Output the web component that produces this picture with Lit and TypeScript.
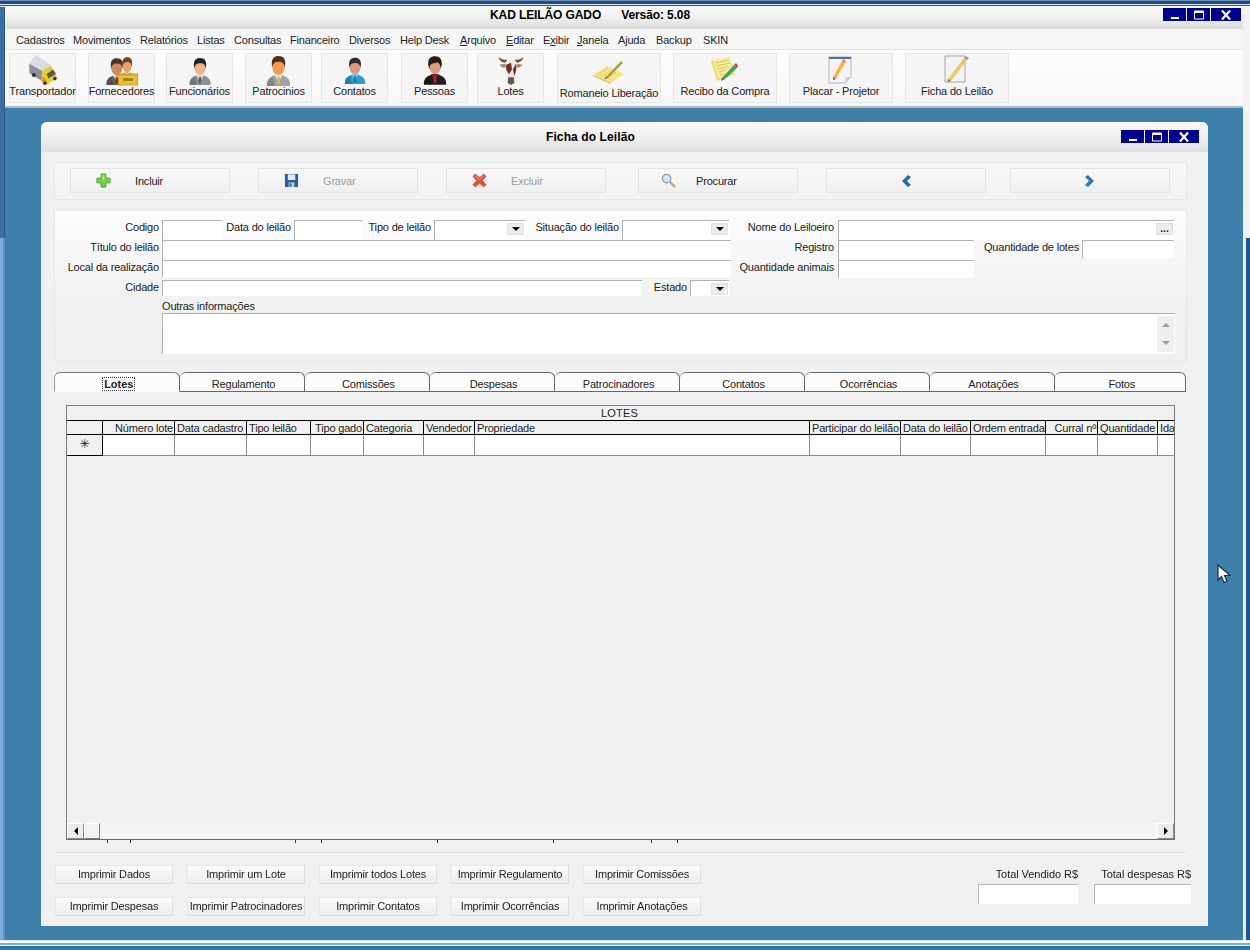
import { LitElement, html, css, svg } from "lit";
import { customElement } from "lit/decorators.js";

const person = (o: { hair: string; skin: string; suit: string; shirt: string; tie: string; t?: string }) => svg`
<g transform=${o.t || ""}>
  <path d="M4 32C3 24 9 21.5 16 20c7 1.500 13 4 12 12Z" fill=${o.suit}/>
  <path d="M4 32C4 27 6 24.500 10 22.500L12 32Z" fill="#000" opacity=".18"/>
  <path d="M11.500 20.500 16 28l4.500-7.500Z" fill=${o.shirt}/>
  <path d="M15 22.500h2l.7 6-1.700 2.500-1.700-2.500Z" fill=${o.tie}/>
  <ellipse cx="16" cy="12" rx="6.500" ry="8.500" fill=${o.skin}/>
  <path d="M9.500 13C7.500 3 12 1 16 1c5 0 8.500 3 6.500 12-.5-4-2-6-6.500-6-4 0-6 2-6.500 6Z" fill=${o.hair}/>
</g>`;

const ICONS: Record<string, unknown> = {
  truck: html`<svg class="ic" style="width:30px;height:31px" viewBox="0 0 32 34">
    <path d="M1 10 8 1l17 11-8 7Z" fill="#d9dbe2"/>
    <path d="M1 10v11l13 8 3-10Z" fill="#8f8e9e"/>
    <path d="M1 10l16 9" stroke="#f2f2f6" stroke-width=".8"/>
    <path d="M15 19l9-6 6 7 1 7-11 7-6-3Z" fill="#e8cb35"/>
    <path d="M20 22l7-5 3 5-8 5Z" fill="#5e5a48"/>
    <path d="M15 25l5 3v4l-6-3Z" fill="#c9a41c"/>
    <circle cx="6" cy="23" r="2.200" fill="#333"/><circle cx="18" cy="32" r="2" fill="#333"/><circle cx="29" cy="27" r="2" fill="#333"/>
  </svg>`,
  forn: html`<svg class="ic" style="width:34px;height:31px;margin-top:2px" viewBox="0 0 34 30">
    ${person({ hair: "#4b3428", skin: "#c98a5e", suit: "#666158", shirt: "#ddd", tie: "#8a2f2f", t: "translate(-2 1) scale(.86)" })}
    ${person({ hair: "#6a4526", skin: "#e5a06b", suit: "#8a6a2e", shirt: "#eee", tie: "#9c7a24", t: "translate(11 0) scale(.7 .78)" })}
    <path d="M13 17h20v12H13Z" fill="#cfa21f"/><path d="M14 19h18v9H14Z" fill="#e6c03c"/><path d="M18 21.500h10v3H18Z" fill="#a5811a"/>
  </svg>`,
  func: html`<svg class="ic" style="width:22px;height:28px;margin-top:3px" viewBox="4 0 24 32">
    ${person({ hair: "#26211e", skin: "#edb48c", suit: "#8d9092", shirt: "#dfe2e4", tie: "#5a6064" })}
  </svg>`,
  patr: html`<svg class="ic" style="width:25px;height:31px;margin-top:1px" viewBox="3 0 26 32">
    ${person({ hair: "#4a3322", skin: "#f29a4f", suit: "#9fa1a3", shirt: "#e4e4dc", tie: "#d5bb3e" })}
  </svg>`,
  cont: html`<svg class="ic" style="width:22px;height:27px;margin-top:3px" viewBox="4 0 24 32">
    ${person({ hair: "#352a26", skin: "#dc9a78", suit: "#2f9bc9", shirt: "#6ec4e4", tie: "#1f7aa4" })}
  </svg>`,
  pess: html`<svg class="ic" style="width:24px;height:32px" viewBox="3 0 26 32">
    ${person({ hair: "#2b1a16", skin: "#d99c80", suit: "#241c1e", shirt: "#7d2030", tie: "#a02c3c" })}
    <path d="M9 6C9 1 23 0 23 7c0 3 .5 5-1 7 0-3-1-6-4-6-3 1-6 1-7.500 3L10 15C9 12 8.500 9 9 6Z" fill="#2b1a16"/>
  </svg>`,
  cow: html`<svg class="ic" style="width:28px;height:29px;margin-top:2px" viewBox="0 0 28 30">
    <path d="M9 7C5 7 2 5 1 1c2 2 5 3 9 3ZM19 7c4 0 7-2 8-6-2 2-5 3-9 3Z" fill="#6f5038"/>
    <path d="M8 8 2 9l3 3h5ZM20 8l6 1-3 3h-5Z" fill="#a9836b"/>
    <path d="M8 6c4-2 8-2 12 0l-1 9-2 10h-6L9 15Z" fill="#efe8e2"/>
    <path d="M9 9l5-2 1 7-3 5-3-5ZM16 14l3-6 .5 6-2 7Z" fill="#6c2f28"/>
    <path d="M11 22h6l.5 6-3.500 2-3.500-2Z" fill="#5c5e52"/>
  </svg>`,
  rom: html`<svg class="ic" style="width:32px;height:24px;margin-top:6px" viewBox="0 0 32 24">
    <path d="M0 15 14 6l17 8-13 9Z" fill="#f4e58c"/>
    <path d="M4 15l11-7M8 17l11-7M12 19l11-7" stroke="#d8c45e" stroke-width=".7"/>
    <path d="M0 15l18 8v1L0 16Z" fill="#c9b552"/>
    <path d="M13 17 28 1l2 2L15 18Z" fill="#a8a13c"/><path d="M13 17l-2 2 4-1Z" fill="#444"/>
  </svg>`,
  rec: html`<svg class="ic" style="width:28px;height:25px;margin-top:3px" viewBox="0 0 28 25">
    <path d="M0 4 18 0l6 17-18 7Z" fill="#e9d868"/><path d="M2 3 19 .5l5 15L7 22Z" fill="#f7ec98"/>
    <path d="M4 6l14-3M5 9l14-3M6 12l10-2M8 15l6-2M9 18l4-1" stroke="#c8ba5a" stroke-width=".8"/>
    <path d="M11 21 23 8l3 3-12 11Z" fill="#3fa35a"/><path d="M23 8l2-2 2 3-1 2Z" fill="#c8403a"/><path d="M11 21l-1 3 4-2Z" fill="#555"/>
  </svg>`,
  plac: html`<svg class="ic" style="width:26px;height:28px;margin-top:2px" viewBox="0 0 26 28">
    <path d="M1 1h22v20l-6 6H1Z" fill="#f4f4f8" stroke="#9fa4b0" stroke-width=".8"/>
    <path d="M1 1h22v2H1Z" fill="#4f6f9c"/>
    <path d="M17 27l1-6h5Z" fill="#c9cbd8"/>
    <path d="M5 21 14 5l3 2-9 16Z" fill="#eeb93a"/><path d="M14 5l1-2 3 2-1 2Z" fill="#d08a3a"/><path d="M5 21l0 3 3-1Z" fill="#555"/>
  </svg>`,
  fich: html`<svg class="ic" style="width:26px;height:29px;margin-top:1px" viewBox="0 0 26 29">
    <path d="M1 1h20v26H1Z" fill="#f3f3f3" stroke="#8f8f8f" stroke-width=".8"/>
    <path d="M4 24 20 3l3 2L7 26Z" fill="#eac66a"/><path d="M20 3l2-2 3 2-2 2Z" fill="#9a9a9a"/><path d="M4 24l-.5 3 3.500-1Z" fill="#7c6a3c"/>
  </svg>`,
};

const plus = html`<svg class="b" viewBox="0 0 16 16"><path d="M5.500 1h5v4.500H15v5h-4.500V15h-5v-4.500H1v-5h4.500Z" fill="#7ccf4e" stroke="#4a9a2c"/><path d="M7 2.500h2v5h-2Z" fill="#b6ec8c"/></svg>`;
const floppy = html`<svg class="b" viewBox="0 0 16 16"><path d="M1 1h14v14H1Z" fill="#2a5c9e"/><path d="M4 1.500h8v6H4Z" fill="#e6eaf2"/><path d="M5 10h6v5H5Z" fill="#c4ccd8"/><path d="M6 11h2v3.500H6Z" fill="#2a5c9e"/></svg>`;
const cross = html`<svg class="b" viewBox="0 0 16 16"><path d="M1 3.500 3.500 1 8 5l4.500-4L15 3.500 11 8l4 4.500-2.500 2.500L8 11l-4.500 4L1 12.500 5 8Z" fill="#e4503c" stroke="#b8361f" stroke-width=".6"/><path d="M3 3 8 7l4-3.500" stroke="#f5a590" fill="none"/></svg>`;
const lens = html`<svg class="b" viewBox="0 0 16 16"><circle cx="6" cy="6" r="4.500" fill="#cfe6f4" stroke="#7f9fb4" stroke-width="1.300"/><path d="M4 4.500a3 3 0 0 1 3-1" stroke="#fff" fill="none"/><path d="M9.500 9.500 15 15" stroke="#c9a36a" stroke-width="2.400"/></svg>`;
const chevL = html`<svg class="b n" viewBox="0 0 12 14"><path d="M8 1 2 7l6 6 3-2-4-4 4-4Z" fill="#2468ac"/></svg>`;
const chevR = html`<svg class="b n" viewBox="0 0 12 14"><path d="M4 1l6 6-6 6-3-2 4-4-4-4Z" fill="#2f78b4"/></svg>`;

const MENU: [unknown, number][] = [
  ["Cadastros", 57], ["Movimentos", 67], ["Relatórios", 57], ["Listas", 37], ["Consultas", 56], ["Financeiro", 59], ["Diversos", 51], ["Help Desk", 60],
  [html`<u>A</u>rquivo`, 46], [html`<u>E</u>ditar`, 37], [html`E<u>x</u>ibir`, 34], [html`<u>J</u>anela`, 41], ["Ajuda", 38], ["Backup", 47], ["SKIN", 40],
];
const TOOLS: [string, string, number, number][] = [
  ["Transportador", "truck", 67, 0], ["Fornecedores", "forn", 67, 12], ["Funcionários", "func", 67, 11], ["Patrocinios", "patr", 67, 12], ["Contatos", "cont", 67, 9],
  ["Pessoas", "pess", 67, 13], ["Lotes", "cow", 67, 9], ["Romaneio Liberação", "rom", 104, 13], ["Recibo da Compra", "rec", 104, 12], ["Placar - Projetor", "plac", 104, 12], ["Ficha do Leilão", "fich", 104, 12],
];
const TABS = ["Lotes", "Regulamento", "Comissões", "Despesas", "Patrocinadores", "Contatos", "Ocorrências", "Anotações", "Fotos"];
const COLS: [string, string?][] = [
  ["", ""], ["Número lote", "r"], ["Data cadastro"], ["Tipo leilão"], ["Tipo gado", "r"], ["Categoria"], ["Vendedor"], ["Propriedade"], ["Participar do leilão"], ["Data do leilão"], ["Ordem entrada"], ["Curral nº", "r"], ["Quantidade"], ["Ida"],
];
const TICKS = [41, 64, 229, 255, 371, 487, 585, 611];
const PRINT = ["Imprimir Dados", "Imprimir um Lote", "Imprimir todos Lotes", "Imprimir Regulamento", "Imprimir Comissões", "Imprimir Despesas", "Imprimir Patrocinadores", "Imprimir Contatos", "Imprimir Ocorrências", "Imprimir Anotações"];

@customElement("app-root")
export class AppRoot extends LitElement {
  static styles = css`
    :host { display: block; width: 1250px; height: 950px; position: relative; overflow: hidden;
      font-family: "Liberation Sans", Arial, sans-serif; font-size: 11px; letter-spacing: -0.18px; color: #222; }
    * { box-sizing: border-box; }
    .screen { width: 1250px; height: 950px; display: flex; flex-direction: column; padding: 0 7px 0 5px; filter: blur(.3px);
      background:
        linear-gradient(to right, #3c6ea4 0 4px, #27598c 4px 5px, transparent 5px 1243px, #f0f2f4 1243px 1250px) top/100% 238px no-repeat,
        linear-gradient(to right, #7eaede 0 3px, #5a92c8 3px 5px, transparent 5px 1243px, #e8eef4 1243px 1246px, #1e5596 1246px); }
    .topedge { height: 7px; margin: 0 -7px 0 -5px; flex: none;
      background: linear-gradient(#6f93b8 0 1px, #1f4c80 1px 4px, #dfe6ee 4px 5px, #27598c 5px 6px, #f2f2f2 6px); }
    .title { height: 22px; flex: none; display: flex; align-items: flex-start; padding-top: 1px; line-height: 14px; background: linear-gradient(#fafafa, #f2f2f2 40%, #dcdcdc); font-weight: bold; font-size: 12px; letter-spacing: -.1px; color: #000; }
    .title .t1 { margin-left: 485px; } .title .t2 { margin-left: 20px; }
    .winbtns { margin-left: auto; display: flex; gap: 1px; height: 13px; align-self: flex-start; margin-right: 2px; }
    .winbtns span { width: 23px; background: #00008e; display: flex; align-items: center; justify-content: center; }
    .winbtns span:last-child { width: 30px; }
    .winbtns svg { width: 12px; height: 10px; display: block; }
    .menu { height: 21px; flex: none; display: flex; align-items: center; padding: 1px 0 0 11px; background: #f6f6f6; border-bottom: 1px solid #e2e2e2; }
    .menu span { flex: none; white-space: nowrap; }
    .toolbar { height: 58px; flex: none; display: flex; padding: 3px 0 0 4px; background: linear-gradient(#fdfdfd, #f7f7f7); border-bottom: 2px solid #b4b8bc; }
    .tool { height: 50px; flex: none; border: 1px solid #e6e6e6; background: #f5f5f5; display: flex; flex-direction: column; align-items: center; white-space: nowrap; }
    .iw { height: 31px; flex: none; display: flex; justify-content: center; align-items: flex-start; }
    .tool .ic { display: block; flex: none; }
    .tool .lb { line-height: 13px; }
    .tool .lb.low { position: relative; top: 2px; }
    .mdi { flex: 1; background: #3e7fa9; padding: 14px 35px 0 36px; }
    .win { height: 804px; background: #eef2f6; border-radius: 6px 6px 0 0; display: flex; flex-direction: column; }
    .wtitle { height: 30px; flex: none; display: flex; align-items: center; border-radius: 6px 6px 0 0; background: linear-gradient(#fbfbfb, #ececec 60%, #dedede); font-weight: bold; font-size: 12px; letter-spacing: .1px; color: #000; }
    .wtitle .tt { margin-left: 505px; }
    .wtitle .winbtns { margin-top: 8px; margin-right: 9px; }
    .body { flex: 1; margin: 0 5px; background: #f0f0f0; padding: 10px 16px 0 8px; display: flex; flex-direction: column; }
    .actions { height: 38px; flex: none; border: 1px solid #e6e6e6; background: linear-gradient(#f8f8f8, #f2f2f2); display: flex; padding: 5px 0 0 15px; }
    .act { width: 160px; height: 25px; flex: none; border: 1px solid #e2e2e2; background: linear-gradient(#f8f8f8, #efefef); display: flex; align-items: center; padding-left: 25px; }
    .act .b { width: 15px; height: 15px; flex: none; }
    .act span { margin-left: 24px; }
    .act.off span { color: #9a9a9a; }
    .act.nav { justify-content: center; padding: 0; }
    .act .b.n { width: 12px; height: 14px; }
    .m28 { margin-left: 28px; } .m32 { margin-left: 32px; } .m24 { margin-left: 24px; }
    .form { height: 152px; flex: none; margin-top: 10px; border: 1px solid #e6e6e6; background: linear-gradient(#fcfcfc, #f1f1f1 60%, #efefef); padding-top: 9px; }
    .cols { display: flex; height: 80px; }
    .left { width: 676px; flex: none; } .right { margin-left: 7px; flex: 1; }
    .row { display: flex; height: 20px; }
    .lbl { flex: none; text-align: right; line-height: 15px; white-space: nowrap; }
    .w105 { width: 104px; } .w69 { width: 69px; } .w94 { width: 94px; } .w45 { width: 45px; } .w96 { width: 96px; } .w102 { width: 105px; }
    .in { flex: none; margin-left: 3px; height: 20px; background: #fff; border-top: 1px solid #b0b0b0; border-left: 1px solid #b0b0b0; position: relative; }
    .right .in { margin-left: 4px; }
    .right .in.near { margin-left: 3px; }
    .in.short { height: 18px; } .in.h17 { height: 17px; } .in.h16 { height: 16px; }
    .w60 { width: 60px; } .w68 { width: 68px; } .w91 { width: 91px; } .w107 { width: 107px; } .w569 { width: 569px; } .w480 { width: 480px; } .w39 { width: 39px; } .w336 { width: 336px; } .w136 { width: 136px; } .w92 { width: 92px; }
    .drop { position: absolute; right: 1px; top: 2px; width: 17px; height: 12px; background: #ececec; border: 1px solid #e0e0e0; display: flex; align-items: center; justify-content: center; }
    .drop::after { content: ""; border: 4px solid transparent; border-top: 4px solid #000; border-bottom: 0; }
    .dots { position: absolute; right: 1px; top: 2px; width: 17px; height: 12px; background: #ececec; border: 1px solid #e0e0e0; font-size: 10px; font-weight: bold; line-height: 9px; text-align: center; letter-spacing: 0; font-style: normal; }
    .oi { margin: 0 0 0 107px; line-height: 13px; height: 13px; }
    .ta { margin: 0 0 0 107px; width: 1013px; height: 41px; background: #fff; border-top: 1px solid #b0b0b0; border-left: 1px solid #b0b0b0; display: flex; justify-content: flex-end; padding: 2px 1px 2px 0; }
    .sb { width: 17px; background: #efefef; display: flex; flex-direction: column; justify-content: space-between; align-items: center; padding: 7px 0; }
    .tri-u { border: 4px solid transparent; border-bottom: 4px solid #9a9a9a; border-top: 0; }
    .tri-d { border: 4px solid transparent; border-top: 4px solid #9a9a9a; border-bottom: 0; }
    .tabs { display: flex; height: 20px; flex: none; margin-top: 10px; }
    .tab { width: 125px; flex: none; height: 20px; background: #fcfcfc; border: 1px solid #666; border-radius: 6px 6px 0 0; display: flex; align-items: center; justify-content: center; padding: 3px 0 0 4px; }
    .tab:first-child { width: 125.500px; padding-left: 4px; }
    .tab + .tab { border-left: 0; }
    .tab:last-child { width: 131.500px; }
    .tab.on { border-bottom-color: #fcfcfc; border-top-color: #777; border-left-color: #999; font-weight: bold; letter-spacing: -.05px; }
    .tab.on span { outline: 1px dotted #333; padding: 0 1px; line-height: 12px; }
    .panel { flex: 1; background: #f0f0f0; padding: 13px 12px 0; display: flex; flex-direction: column; min-height: 0; }
    .grid { height: 435px; flex: none; border: 1px solid #777; border-bottom-color: #666; display: flex; flex-direction: column; background: #f0f0f0; overflow: hidden; width: 1109px; }
    .gtitle { height: 14px; flex: none; text-align: center; line-height: 15px; padding-right: 2px; letter-spacing: .15px; }
    .gr { display: grid; grid-template-columns: 36px 72px 72px 64px 53px 60px 51px 335px 91px 70px 75px 52px 60px 17px; flex: none; }
    .gh { height: 15px; border-top: 1px solid #000; border-bottom: 1px solid #000; }
    .gh div { border-right: 1px solid #000; line-height: 14px; padding: 0 1px 0 2px; white-space: nowrap; overflow: hidden; background: #f0f0f0; }
    .gh div:last-child { border-right: 0; }
    .gh .r { text-align: right; }
    .gb { height: 21px; }
    .gb div { background: #fff; border-right: 1px solid #8a8a8a; border-bottom: 1px solid #8a8a8a; }
    .gb div:first-child { background: #f0f0f0; border-right: 1px solid #000; border-bottom: 1px solid #000; text-align: center; font: 12px/19px "DejaVu Sans", sans-serif; letter-spacing: 0; }
    .gb div:last-child { border-right: 0; }
    .gfill { flex: 1; }
    .hbar { height: 16px; flex: none; display: flex; background-color: #f6f6f6; background-image: repeating-conic-gradient(#ececec 0 25%, #fbfbfb 0 50%); background-size: 2px 2px; }
    .sbtn { width: 17px; background: #ececec; border: 1px solid; border-color: #fff #888 #888 #fff; display: flex; align-items: center; justify-content: center; flex: none; }
    .sbtn.thumb { width: 16px; background: #f2f2f2; border-right-color: #777; border-bottom-color: #777; }
    .sbtn.end { margin-left: auto; }
    .tl { border: 4px solid transparent; border-right: 4px solid #000; border-left: 0; }
    .tr { border: 4px solid transparent; border-left: 4px solid #000; border-right: 0; }
    .ticks { display: block; flex: none; width: 1109px; height: 3px; }
    .sep { height: 1px; margin: 9px -12px 0; flex: none; background: #dedede; box-shadow: 0 1px 0 #f8f8f8; }
    .foot { display: flex; flex: none; margin: 12px -12px 0; }
    .prints { display: grid; grid-template-columns: repeat(5, 118px); column-gap: 14px; row-gap: 13px; margin-left: 1px; }
    .pb { height: 19px; background: linear-gradient(#fafafa, #ececec); border: 1px solid #e6e6e6; border-bottom-color: #dadada; border-right-color: #dedede; text-align: center; line-height: 17px; white-space: nowrap; }
    .totals { margin-left: 277px; display: flex; gap: 16px; margin-top: 2px; }
    .tot { display: flex; flex-direction: column; letter-spacing: -.05px; }
    .tot .lbl { height: 17px; line-height: 14px; }
    .tot .val { height: 20px; background: #fff; border-top: 1px solid #b4b4b4; border-left: 1px solid #b4b4b4; }
    .t100 { width: 100px; } .t97 { width: 97px; margin-right: -4px; }
    .bottom { height: 10px; flex: none; margin: 0 -7px 0 -5px; background: linear-gradient(#dfeaf2 0 1px, #ffffff 1px 3px, #79aed0 3px 5px, #f4fafc 5px 6px, #2b6ca4 6px 8px, #2a78b4 8px); }
    .cursor { position: absolute; left: 1217px; top: 564px; width: 14px; height: 20px; display: block; }
  `;

  private winBtns() {
    return html`<div class="winbtns">
      <span><svg viewBox="0 0 12 10"><path d="M2 7h8v2H2Z" fill="#fff"/></svg></span>
      <span><svg viewBox="0 0 12 10"><path d="M1.500 1h9v8h-9Z" fill="none" stroke="#fff"/><path d="M1.500 2h9" stroke="#fff" stroke-width="2"/></svg></span>
      <span><svg viewBox="0 0 12 10"><path d="M2 .5 6 5l4-4.500M2 9.500 6 5l4 4.500" fill="none" stroke="#fff" stroke-width="2.200"/></svg></span>
    </div>`;
  }

  render() {
    return html`<div class="screen">
      <div class="topedge"></div>
      <div class="title"><span class="t1">KAD LEILÃO GADO</span><span class="t2">Versão: 5.08</span>${this.winBtns()}</div>
      <div class="menu">${MENU.map(([l, w]) => html`<span style="width:${w}px">${l}</span>`)}</div>
      <div class="toolbar">${TOOLS.map(([l, ic, w, g]) => html`<div class="tool" style="width:${w}px;margin-left:${g}px"><div class="iw">${ICONS[ic]}</div><span class="lb ${ic === "rom" ? "low" : ""}">${l}</span></div>`)}</div>
      <div class="mdi"><div class="win">
        <div class="wtitle"><span class="tt">Ficha do Leilão</span>${this.winBtns()}</div>
        <div class="body">
          <div class="actions">
            <div class="act">${plus}<span>Incluir</span></div>
            <div class="act off m28">${floppy}<span>Gravar</span></div>
            <div class="act off m28">${cross}<span>Excluir</span></div>
            <div class="act m32" style="padding-left:22px">${lens}<span style="margin-left:20px">Procurar</span></div>
            <div class="act nav m28">${chevL}</div>
            <div class="act nav m24">${chevR}</div>
          </div>
          <div class="form">
            <div class="cols">
              <div class="left">
                <div class="row"><div class="lbl w105">Codigo</div><div class="in w60"></div><div class="lbl w69">Data do leilão</div><div class="in w68"></div><div class="lbl w69">Tipo de leilão</div><div class="in w91"><i class="drop"></i></div><div class="lbl w94">Situação do leilão</div><div class="in w107"><i class="drop"></i></div></div>
                <div class="row"><div class="lbl w105">Título do leilão</div><div class="in w569"></div></div>
                <div class="row"><div class="lbl w105">Local da realização</div><div class="in w569 h17"></div></div>
                <div class="row"><div class="lbl w105">Cidade</div><div class="in w480 h16"></div><div class="lbl w45">Estado</div><div class="in w39 h16"><i class="drop"></i></div></div>
              </div>
              <div class="right">
                <div class="row"><div class="lbl w96">Nome do Leiloeiro</div><div class="in w336"><i class="dots">...</i></div></div>
                <div class="row"><div class="lbl w96">Registro</div><div class="in w136"></div><div class="lbl w102">Quantidade de lotes</div><div class="in near w92 short"></div></div>
                <div class="row"><div class="lbl w96">Quantidade animais</div><div class="in w136 short"></div></div>
              </div>
            </div>
            <div class="oi">Outras informações</div>
            <div class="ta"><div class="sb"><i class="tri-u"></i><i class="tri-d"></i></div></div>
          </div>
          <div class="tabs">${TABS.map((t, i) => html`<div class="tab ${i === 0 ? "on" : ""}"><span>${t}</span></div>`)}</div>
          <div class="panel">
            <div class="grid">
              <div class="gtitle">LOTES</div>
              <div class="gr gh">${COLS.map(([c, k]) => html`<div class=${k || ""}>${c}</div>`)}</div>
              <div class="gr gb">${COLS.map((_, i) => html`<div>${i === 0 ? "✳" : ""}</div>`)}</div>
              <div class="gfill"></div>
              <div class="hbar"><div class="sbtn"><i class="tl"></i></div><div class="sbtn thumb"></div><div class="sbtn end"><i class="tr"></i></div></div>
            </div>
            <svg class="ticks" viewBox="0 0 1109 3">${TICKS.map((x) => svg`<rect x=${x} y="0" width="1" height="3" fill="#333"/>`)}</svg>
            <div class="sep"></div>
            <div class="foot">
              <div class="prints">${PRINT.map((p) => html`<div class="pb">${p}</div>`)}</div>
              <div class="totals">
                <div class="tot"><div class="lbl">Total Vendido R$</div><div class="val t100"></div></div>
                <div class="tot"><div class="lbl t97">Total despesas R$</div><div class="val t97"></div></div>
              </div>
            </div>
          </div>
        </div>
      </div></div>
      <div class="bottom"></div>
    </div>
    <svg class="cursor" viewBox="0 0 14 20"><path d="M1 1v15l3.500-3.500 2.500 6 3-1.300-2.500-5.700H13Z" fill="#fff" stroke="#1a2c3c" stroke-width="1.200"/></svg>`;
  }
}
